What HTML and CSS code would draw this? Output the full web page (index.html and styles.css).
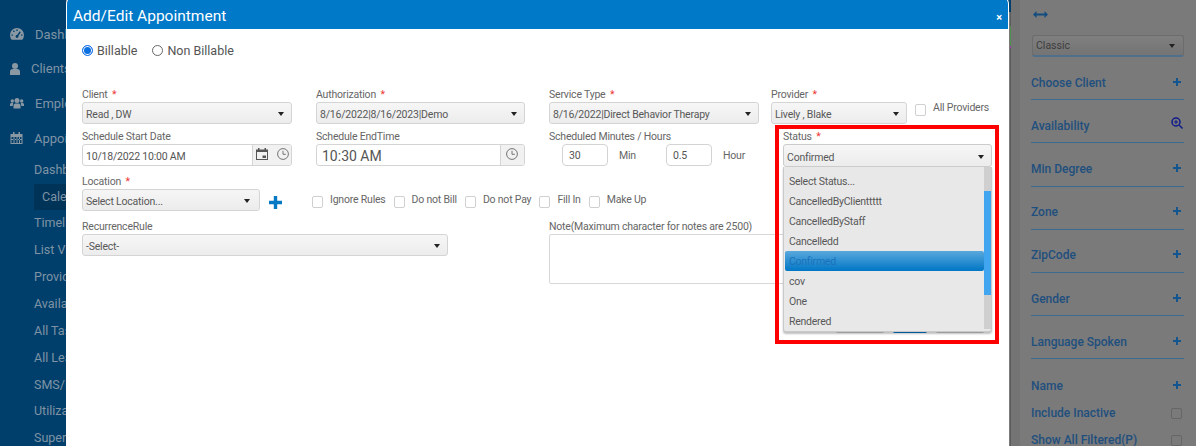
FILE: index.html
```html
<!DOCTYPE html>
<html lang="en">
<head>
<meta charset="utf-8">
<title>Add/Edit Appointment</title>
<link rel="stylesheet" href="styles.css">
</head>
<body>
<div class="page">
  <nav class="sidebar">
    <div class="nav-top"><svg class="nav-icon" viewBox="0 0 14 12"><path fill-rule="evenodd" d="M7 0a7 7 0 0 0-7 7c0 1.800.6 3.400 1.700 4.700h10.600A7 7 0 0 0 14 7a7 7 0 0 0-7-7zM6.300 1.600h1.400V3H6.300zM2.900 3.200l1-1 1 1-1 1zM1.500 6.400h1.400v1.400H1.500zM11.100 6.400h1.400v1.400h-1.400zM9.800 3.300l1 .9L8.300 8a1.400 1.400 0 1 1-1.200-.9z"/></svg><span>Dashboard</span></div>
    <div class="nav-top nav-client"><svg class="nav-icon nav-icon-user" viewBox="0 0 10 12"><circle cx="5" cy="3" r="3"/><path d="M0 12V8.500C0 7 1.200 6 2.500 6h5C8.800 6 10 7 10 8.500V12z"/></svg><span>Clients</span></div>
    <div class="nav-top"><svg class="nav-icon" viewBox="0 0 14 11"><circle cx="7" cy="3" r="2.500"/><circle cx="2.300" cy="3.500" r="1.700"/><circle cx="11.700" cy="3.500" r="1.700"/><path d="M3.500 11V8c0-1.300 1-2 2-2h3c1 0 2 .7 2 2v3zM0 8.500V7c0-1 .8-1.500 1.500-1.500h1.700L2.700 8.500zM14 8.500V7c0-1-.8-1.500-1.500-1.500h-1.700l.5 3z"/></svg><span>Employees</span></div>
    <div class="nav-top"><svg class="nav-icon nav-icon-cal" viewBox="0 0 12 12"><path fill-rule="evenodd" d="M0 2h2.500V0h1.500v2h4V0h1.500v2H12v10H0zm1 3v6h10V5zm2 0v6h1V5zm3 0v6h1V5zm2.500 0v6h1V5zM1 7h10v1H1z"/></svg><span>Appointments</span></div>
    <div class="nav-sub nav-sub-first">Dashboard</div>
    <div class="nav-sub nav-active">Calendar</div>
    <div class="nav-sub">Timeline</div>
    <div class="nav-sub">List View</div>
    <div class="nav-sub">Provider</div>
    <div class="nav-sub">Availability</div>
    <div class="nav-sub">All Tasks</div>
    <div class="nav-sub">All Leaves</div>
    <div class="nav-sub">SMS/Email</div>
    <div class="nav-sub">Utilization</div>
    <div class="nav-sub">Supervision</div>
  </nav>

  <aside class="filters">
    <svg class="width-toggle" viewBox="0 0 15 7"><path d="M0 3.500 3.500 0v2.500h8V0L15 3.500 11.500 7V4.500h-8V7z"/></svg>
    <div class="filter-select"><span>Classic</span><i class="caret"></i></div>
    <div class="filter-row"><span>Choose Client</span><svg class="plus-sm" viewBox="0 0 8 8"><path d="M3 0h2v3h3v2H5v3H3V5H0V3h3z"/></svg></div>
    <div class="filter-row"><span>Availability</span><svg class="zoom-icon" viewBox="0 0 12 12"><circle cx="5" cy="5" r="4" fill="none" stroke="#0d1a8c" stroke-width="1.500"/><path d="M3 4.500h4v1H3zM4.500 3h1v4h-1zM7.800 8.800l1-1L12 11l-1 1z" fill="#0d1a8c"/></svg></div>
    <div class="filter-row"><span>Min Degree</span><svg class="plus-sm" viewBox="0 0 8 8"><path d="M3 0h2v3h3v2H5v3H3V5H0V3h3z"/></svg></div>
    <div class="filter-row"><span>Zone</span><svg class="plus-sm" viewBox="0 0 8 8"><path d="M3 0h2v3h3v2H5v3H3V5H0V3h3z"/></svg></div>
    <div class="filter-row"><span>ZipCode</span><svg class="plus-sm" viewBox="0 0 8 8"><path d="M3 0h2v3h3v2H5v3H3V5H0V3h3z"/></svg></div>
    <div class="filter-row"><span>Gender</span><svg class="plus-sm" viewBox="0 0 8 8"><path d="M3 0h2v3h3v2H5v3H3V5H0V3h3z"/></svg></div>
    <div class="filter-row"><span>Language Spoken</span><svg class="plus-sm" viewBox="0 0 8 8"><path d="M3 0h2v3h3v2H5v3H3V5H0V3h3z"/></svg></div>
    <div class="filter-row filter-plain filter-name"><span>Name</span><svg class="plus-sm" viewBox="0 0 8 8"><path d="M3 0h2v3h3v2H5v3H3V5H0V3h3z"/></svg></div>
    <div class="filter-row filter-plain"><span>Include Inactive</span><i class="filter-check"></i></div>
    <div class="filter-row filter-plain"><span>Show All Filtered(P)</span><i class="filter-check"></i></div>
  </aside>

  <i class="corner-sliver"></i>
  <i class="edge-tick"></i>

  <section class="modal">
    <header class="modal-head"><h1>Add/Edit Appointment</h1><span class="close">×</span></header>
    <div class="modal-body">
      <div class="billing">
        <label class="radio-label"><i class="radio radio-on"></i>Billable</label>
        <label class="radio-label"><i class="radio"></i>Non Billable</label>
      </div>

      <div class="form-grid">
        <div class="field row-a">
          <div class="label">Client <b>*</b></div>
          <div class="select"><span>Read , DW</span><i class="caret"></i></div>
        </div>
        <div class="field row-a">
          <div class="label">Authorization <b>*</b></div>
          <div class="select"><span>8/16/2022|8/16/2023|Demo</span><i class="caret"></i></div>
        </div>
        <div class="field field-third row-a">
          <div class="label">Service Type <b>*</b></div>
          <div class="select"><span>8/16/2022|Direct Behavior Therapy</span><i class="caret"></i></div>
        </div>
        <div class="field field-provider row-a">
          <div class="provider-col">
            <div class="label">Provider <b>*</b></div>
            <div class="select"><span>Lively , Blake</span><i class="caret"></i></div>
          </div>
          <div class="all-providers"><i class="check"></i><span>All Providers</span></div>
        </div>

        <div class="field row-b">
          <div class="label">Schedule Start Date</div>
          <div class="picker">
            <span class="picker-value">10/18/2022 10:00 AM</span>
            <span class="picker-btns">
              <svg class="pick-icon" viewBox="0 0 12 12"><path fill-rule="evenodd" d="M0 1.500h2V0h1.500v1.500h5V0H10v1.500h2V12H0zM1 4v7h10V4zm5.500 3.500H10V10H6.500z" fill="#555"/></svg>
              <svg class="pick-icon" viewBox="0 0 12 12"><circle cx="6" cy="6" r="5.400" fill="none" stroke="#666" stroke-width=".9"/><path d="M6 2.800V6.300h2.800" fill="none" stroke="#666" stroke-width=".9"/></svg>
            </span>
          </div>
        </div>
        <div class="field row-b">
          <div class="label">Schedule EndTime</div>
          <div class="picker">
            <span class="picker-value picker-large">10:30 AM</span>
            <span class="picker-btns picker-btn-one">
              <svg class="pick-icon" viewBox="0 0 12 12"><circle cx="6" cy="6" r="5.400" fill="none" stroke="#666" stroke-width=".9"/><path d="M6 2.800V6.300h2.800" fill="none" stroke="#666" stroke-width=".9"/></svg>
            </span>
          </div>
        </div>
        <div class="field row-b">
          <div class="label">Scheduled Minutes / Hours</div>
          <div class="duration">
            <div class="num">30</div><span class="unit">Min</span>
            <div class="num">0.5</div><span class="unit">Hour</span>
          </div>
        </div>
        <div class="field field-status row-b">
          <div class="label">Status <b>*</b></div>
          <div class="select select-status"><span>Confirmed</span><i class="caret"></i></div>
        </div>

        <div class="field field-location row-c">
          <div class="label">Location <b>*</b></div>
          <div class="location-row">
            <div class="select select-location"><span>Select Location...</span><i class="caret"></i></div>
            <svg class="plus-lg" viewBox="0 0 13 13"><path d="M4.800 0h3.400v4.800H13v3.400H8.200V13H4.800V8.200H0V4.800h4.800z"/></svg>
          </div>
        </div>
        <div class="flags row-c">
          <div class="flag"><i class="check"></i><span>Ignore Rules</span></div>
          <div class="flag"><i class="check"></i><span>Do not Bill</span></div>
          <div class="flag"><i class="check"></i><span>Do not Pay</span></div>
          <div class="flag"><i class="check"></i><span>Fill In</span></div>
          <div class="flag"><i class="check"></i><span>Make Up</span></div>
        </div>

        <div class="field field-recurrence">
          <div class="label">RecurrenceRule</div>
          <div class="select"><span>-Select-</span><i class="caret"></i></div>
        </div>
        <div class="field field-note">
          <div class="label">Note(Maximum character for notes are 2500)</div>
          <div class="textarea"></div>
        </div>
      </div>

      <div class="actions">
        <span class="action"></span><span class="action action-primary"></span><span class="action"></span>
      </div>
    </div>

    <ul class="dropdown">
      <li>Select Status...</li>
      <li>CancelledByClienttttt</li>
      <li>CancelledByStaff</li>
      <li>Cancelledd</li>
      <li class="selected">Confirmed</li>
      <li>cov</li>
      <li>One</li>
      <li>Rendered</li>
      <li class="track"><i class="thumb"></i></li>
    </ul>
  </section>

  <div class="highlight"></div>
</div>
</body>
</html>
```

FILE: styles.css
```css
* { box-sizing: border-box; }
html, body { margin: 0; padding: 0; }
body { width: 1196px; height: 446px; overflow: hidden; font-family: Roboto, "Liberation Sans", sans-serif; color: #666; background: #7a7a7a; }
i { display: block; font-style: normal; }

.page { position: relative; width: 1196px; height: 446px; display: flex; justify-content: space-between; overflow: hidden; }

/* sidebar */
.sidebar { width: 66px; height: 446px; background: #003f6b; color: #7f93a5; padding-top: 24px; white-space: nowrap; overflow: hidden; flex: none; }
.nav-top { display: flex; align-items: center; height: 20px; margin-bottom: 14.700px; padding-left: 10px; font-size: 13px; }
.nav-top span { margin-left: 11px; }
.nav-icon { width: 14px; height: 12px; fill: #8a98a3; flex: none; }
.nav-icon-user { width: 10px; }
.nav-icon-cal { width: 13px; height: 12px; }
.nav-sub { height: 26.850px; line-height: 26.850px; padding-left: 34px; font-size: 12.500px; }
.nav-sub-first { margin-top: -6px; }
.nav-active { background: #003358; padding-left: 8px; margin-left: 34px; }

/* right filters */
.filters { width: 186px; height: 446px; flex: none; padding: 0 12px 0 21px; background: linear-gradient(90deg, #5c5c5c 0, #5c5c5c 1px, #747474 1px, #747474 10px, #7a7a7a 10px); color: #1f4f7e; font-size: 12px; font-weight: 500; overflow: hidden; }
.width-toggle { display: block; width: 15px; height: 7px; margin: 11px 0 0 2px; fill: #134d80; }
.filter-select { display: flex; align-items: center; justify-content: space-between; height: 22px; margin: 17px 0 0 1px; padding: 0 8px 0 3px; border: 1px solid #6c6c6c; border-bottom: 2px solid #4f6f8d; border-radius: 3px; background: linear-gradient(#7f7f7f, #747474); color: #3d3d3d; font-size: 10.500px; font-weight: 400; }
.filter-row { display: flex; align-items: center; justify-content: space-between; height: 43.200px; padding: 9px 3px 0 0; border-bottom: 1px solid #3d6a90; }
.filter-plain { border-bottom: 0; height: 27px; padding-top: 0; }
.filter-name { margin-top: 13px; }
.plus-sm { width: 8px; height: 8px; fill: #13568f; margin-top: -2px; }
.zoom-icon { width: 12px; height: 12px; margin: -6px -2px 0 0; }
.filter-check { width: 11px; height: 11px; border: 1px solid #666; border-radius: 2px; background: #7a7a7a; margin: 2px -1px 0 0; }

/* slivers of the page visible past the modal's corner */
.corner-sliver { position: absolute; left: 1000px; top: 0; width: 11px; height: 12px; background: #003f6b; }
.edge-tick { position: absolute; left: 1010px; top: 26px; width: 1px; height: 22px; background: linear-gradient(#4d8f4d 90%, #a03aa0 90%); }

/* modal */
.modal { position: absolute; left: 67px; top: -4px; width: 941px; height: 470px; background: #fff; border-radius: 8px 8px 0 0; box-shadow: 0 0 0 1px #fff; overflow: hidden; }
.modal-head { display: flex; align-items: center; justify-content: space-between; height: 33px; padding: 6px 6px 0 6px; background: #0079c8; color: #fff; }
.modal-head h1 { margin: 0; font-size: 15.500px; font-weight: 400; line-height: 20px; }
.close { font-size: 11px; font-weight: 700; margin-top: 3px; }
.modal-body { padding: 0 0 0 15px; }
.billing { display: flex; align-items: center; height: 17px; margin-top: 13px; font-size: 12.500px; color: #555; }
.radio-label { display: flex; align-items: center; margin-right: 15px; }
.radio { width: 11px; height: 11px; border: 1px solid #666; border-radius: 50%; margin: -1px 4px 0 0; background: #fff; }
.radio-on { border: 1px solid #1a73e8; box-shadow: inset 0 0 0 1px #fff; background: #0a6fe0; }

.form-grid { display: grid; grid-template-columns: 234px 233px 222px 1fr; margin-top: 26px; font-size: 10.500px; letter-spacing: -.2px; }
.field { padding-right: 24px; }
.field-third { padding-right: 12px; }
.label { height: 17px; line-height: 20px; color: #666; white-space: nowrap; }
.label b { color: #e33; font-weight: 400; margin-left: 2px; }
.select { display: flex; align-items: center; justify-content: space-between; height: 22px; padding: 2px 7px 0 3px; border: 1px solid #d4d4d4; border-radius: 3px; background: linear-gradient(#f6f6f6, #ececec); color: #585858; white-space: nowrap; }
.row-a { margin-bottom: 3px; }
.row-b { margin-bottom: 5px; }
.row-c { margin-bottom: 6px; }
.caret { width: 0; height: 0; border-left: 3px solid transparent; border-right: 3px solid transparent; border-top: 4px solid #222; flex: none; }
.field-provider { display: flex; padding-right: 0; }
.provider-col { width: 136px; flex: none; }
.all-providers { display: flex; align-items: flex-start; margin: 19px 0 0 8px; white-space: nowrap; }
.all-providers span { margin: -3px 0 0 7px; }
.check { width: 11px; height: 12px; border: 1px solid #d0d0d0; border-radius: 2px; background: #fff; flex: none; }

.picker { display: flex; align-items: center; height: 22px; border: 1px solid #d4d4d4; border-radius: 3px; white-space: nowrap; }
.picker-value { flex: 1; padding: 2px 0 0 3px; color: #555; }
.picker-large { font-size: 14px; padding-left: 5px; letter-spacing: 0; }
.picker-btns { display: flex; align-items: center; gap: 9px; width: 39px; height: 20px; padding-left: 3px; border-left: 1px solid #d4d4d4; background: #f1f1f1; border-radius: 0 3px 3px 0; }
.picker-btn-one { width: 24px; padding-left: 5px; }
.pick-icon { width: 12px; height: 12px; flex: none; margin-top: -2px; }

.duration { display: flex; align-items: center; padding-left: 13px; }
.num { width: 46px; height: 22px; flex: none; line-height: 22px; padding-left: 6px; border: 1px solid #d4d4d4; border-radius: 4px; color: #555; }
.unit { margin: 0 0 0 11px; width: 47px; flex: none; }
.field-status { padding: 0 0 0 12px; width: 221px; }
.select-status { border-color: #ccc; height: 23px; padding-top: 3px; }

.field-location { padding-right: 0; }
.location-row { display: flex; align-items: center; }
.select-location { width: 178px; flex: none; padding-right: 9px; }
.plus-lg { width: 13px; height: 13px; fill: #0679c4; margin: 5px 0 0 9px; flex: none; }
.flags { grid-column: 2 / 5; display: flex; align-items: center; margin-top: 17px; margin-left: -4px; height: 22px; padding-top: 4px; white-space: nowrap; }
.flag { display: flex; align-items: flex-start; margin-right: 8px; }
.flag span { margin: -3px 0 0 7px; }

.field-recurrence { grid-column: 1 / 3; padding-right: 101px; }
.field-note { grid-column: 3 / 5; padding-right: 16px; }
.textarea { height: 50px; border: 1px solid #d8d8d8; border-radius: 2px; background: #fff; }

.actions { display: flex; gap: 7px; margin: 25px 0 0 753px; }
.action { width: 50px; height: 24px; background: #e6e6e6; border: 1px solid #ccc; border-radius: 3px; }
.action-primary { width: 36px; background: #0079c8; border-color: #0079c8; }

/* status dropdown */
.dropdown { position: absolute; left: 716px; top: 171px; width: 209px; height: 165px; margin: 0; padding: 4px 1px 0; list-style: none; background: #e8e8e8; border: 1px solid #c9c9c9; border-top: 0; border-radius: 0 0 3px 3px; box-shadow: 0 2px 2px rgba(0,0,0,.25); color: #585858; font-size: 10.500px; letter-spacing: -.25px; overflow: hidden; }
.dropdown li { height: 20px; line-height: 22px; padding-left: 4px; margin-right: 6px; }
.dropdown .selected { background: linear-gradient(#5aa8dc, #0076c6); border-radius: 2px; color: #1a72ba; }
.dropdown .track { position: absolute; right: 0; top: 0; bottom: 2px; width: 7px; height: auto; margin: 0; padding: 0; background: #cfcfcf; }
.thumb { width: 7px; height: 104px; margin-top: 24px; background: #42a5f0; }

/* annotation frame */
.highlight { position: absolute; left: 775px; top: 125px; width: 224px; height: 219px; border: 4px solid #f00; }
```
